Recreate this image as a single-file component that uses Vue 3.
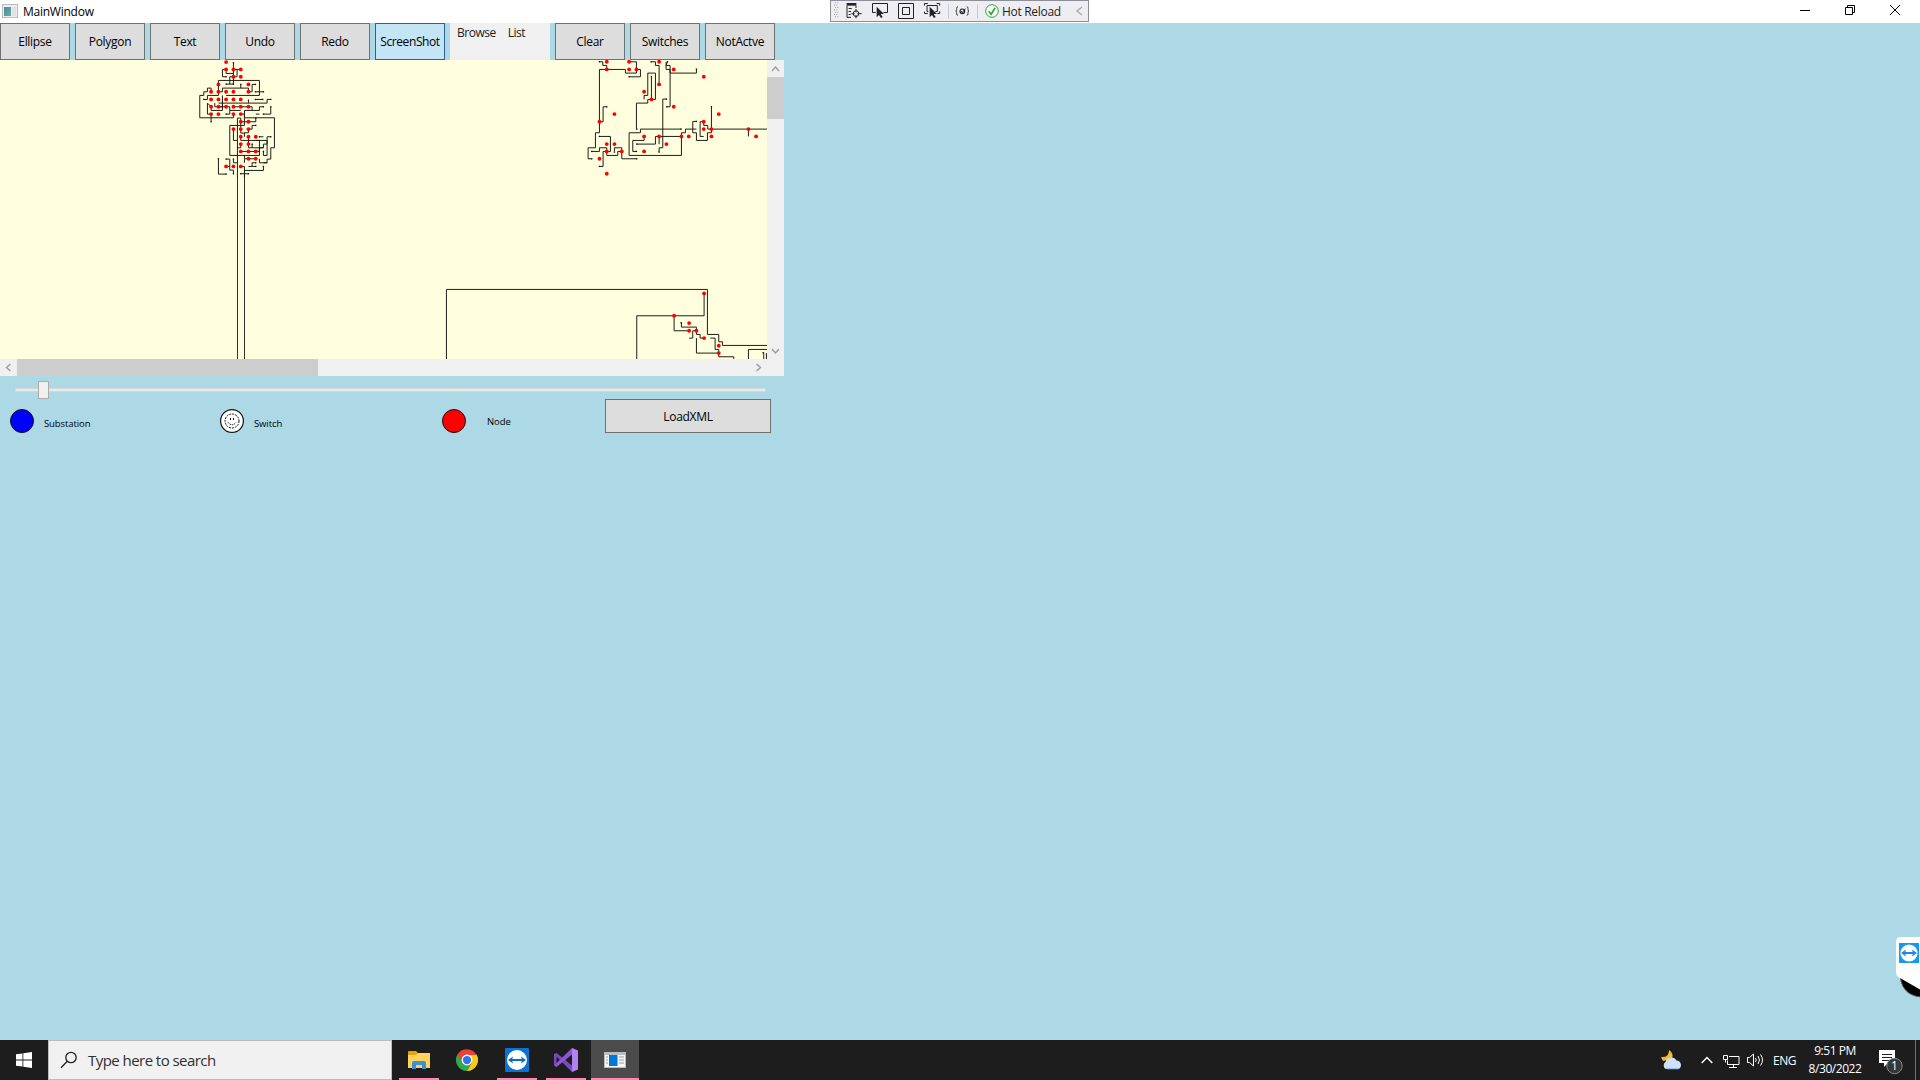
<script setup>
const leftButtons = ['Ellipse', 'Polygon', 'Text', 'Undo', 'Redo', 'ScreenShot']
const rightButtons = ['Clear', 'Switches', 'NotActve']

// Network sections are drawn in triple-density units around their own origin.
const sections = [
  {
    transform: 'translate(190.1 -1.9) scale(.33333)',
    lines: [
      '130,14 130,80', '108,34 97,34 97,56 108,56', '108,34 108,46 130,46', '141,34 141,56 119,56 119,78', '152,34 130,34', '108,78 130,78',
      '85,79 85,67 208,67 208,112 108,112', '85,79 85,112 63,112', '196,79 186,79 186,101 175,101 175,90 97,90 97,101 85,101',
      '152,79 152,90', '196,101 220,101', '63,101 63,90 52,90 52,101 41,101 41,112 29,112 29,179 130,179 130,168',
      '41,124 52,124 52,112 63,112', '196,124 218,124', '242,124 231,124 231,135 85,135', '175,124 175,135',
      '63,146 52,135 52,168 63,168 63,191', '74,135 74,146 97,146 97,124', '97,112 97,157 63,157 63,146', '85,146 119,146 119,157 152,157',
      '108,168 119,168 119,157', '186,157 208,157 208,146 220,146', '130,146 186,146 186,157 163,157 163,179 253,179 253,269 242,269 242,303 231,303 231,314 220,314',
      '220,168 242,168 242,146', '197,168 208,168', '152,168 163,168 163,202 119,202 119,292 208,292 208,247 152,247 152,236',
      '142,180 142,360', '142,180 152,180 152,225 163,225', '152,191 197,191 197,180', '175,213 186,213 186,202 197,202', '175,213 175,224 163,224 163,236',
      '130,213 130,247 141,247', '175,236 175,269 220,269 220,258 231,258 231,236 242,236', '208,236 220,236', '152,258 152,269 141,269',
      '197,247 231,247 231,292 220,292 220,280', '186,258 186,269', '152,280 208,280 208,269 220,269',
      '208,302 208,314 231,314', '197,302 163,302 163,292', '85,302 85,348 108,348', '108,303 119,303 119,336 130,336 130,347', '130,303 130,314 141,314',
      '163,314 163,303', '152,325 163,325 163,337 220,337 220,325', '175,325 186,325 186,314 197,314', '186,325 197,325', '163,337 163,360', '152,347 175,347', '108,325 119,325'
    ],
    ends: [[130,14],[108,56],[108,78],[130,78],[196,79],[152,79],[196,101],[220,101],[41,124],[196,124],[218,124],[242,124],[63,191],[108,168],[220,146],[242,146],[220,168],[197,180],[197,202],[208,236],[242,236],[186,258],[220,280],[85,302],[108,303],[130,303],[108,348],[130,347],[197,314],[197,325],[220,325],[152,347],[175,347]],
    dots: [[108,12],[108,34],[130,34],[152,34],[130,56],[152,56],[85,79],[175,79],[63,101],[85,101],[108,101],[130,101],[175,101],[63,124],[85,124],[108,124],[130,124],[152,124],[63,146],[85,146],[108,146],[130,146],[152,146],[175,146],[63,168],[85,168],[130,168],[152,168],[152,191],[175,191],[130,213],[152,213],[175,213],[152,236],[175,236],[197,236],[152,258],[175,258],[152,280],[175,280],[197,280],[175,302],[197,302],[108,325],[130,325],[152,325]]
  },
  {
    transform: 'translate(580.1 -3.9) scale(.33333)',
    lines: [
      '58,17 68,17 68,28 80,28 80,40', '58,197 58,40 136,40 136,51 169,51 169,40', '147,17 169,17 169,40 181,40 181,62 147,62',
      '213,17 226,17 226,28 237,28 237,85', '192,130 192,118 203,118 203,51 226,51 226,130 213,130', '214,62 214,130 203,130 203,141 169,141 169,219',
      '262,17 258,28 270,28 270,51 349,51 349,39', '258,17 258,40 270,40 270,152 260,152',
      '80,152 69,152 69,197 58,197 58,230 46,230 46,275 24,275 24,308 35,308', '58,241 91,241 91,286 80,286 80,298 113,298 113,286 125,286 125,308 170,308',
      '35,286 58,286 58,275 80,275 80,286 69,286 69,331 58,331', '103,286 103,275 125,275 125,286',
      '259,129 248,129 248,275 237,275 237,288', '303,219 181,219 181,230 147,230 147,298 304,298 304,241',
      '192,241 192,253 158,253 158,286 169,286', '170,264 226,264 226,241 304,241 304,230 316,230 316,219 349,219', '237,241 237,264',
      '349,196 338,196 338,230 349,230 349,253 382,253 382,230 394,230 394,152', '371,208 383,208 383,219 565,219', '371,197 360,197 360,241 371,241', '371,197 371,208', '505,219 505,241'
    ],
    ends: [[58,17],[213,17],[262,17],[349,39],[260,152],[80,152],[170,219],[259,129],[303,219],[349,196],[394,152],[170,264],[58,241],[35,286],[35,308],[58,331],[103,288],[170,308],[237,288],[169,286],[147,62],[214,62]],
    dots: [[80,17],[147,17],[237,17],[80,40],[147,40],[169,40],[281,40],[371,62],[237,85],[192,107],[214,130],[281,152],[103,174],[416,174],[58,197],[371,197],[371,219],[394,219],[505,219],[192,241],[237,241],[304,241],[326,241],[394,241],[528,241],[80,264],[103,264],[259,264],[80,286],[125,286],[192,286],[58,308],[80,353]]
  },
  {
    transform: 'translate(430.1 220.1) scale(.33333)',
    lines: [
      '49,240 49,28 832,28 832,163 866,163 866,185 877,185 877,196 1012,196', '620,240 620,107 822,107 822,40', '732,107 732,152 777,152',
      '754,127 754,141 799,141 799,163 810,163 810,174 822,174', '777,174 788,174 788,152 799,152', '799,174 799,219 866,219 866,230 911,230 911,240',
      '841,174 855,174 855,208 866,208 866,219', '955,240 955,208 1012,208', '1001,217 1001,240', '1009,219 1009,240'
    ],
    ends: [[753,128],[999,218]],
    dots: [[822,40],[732,107],[777,129],[777,152],[799,152],[822,174],[866,197],[866,219]]
  }
]
</script>

<template>
  <div class="desktop">
    <header class="title">
      <svg class="app-icon" width="16" height="14" viewBox="0 0 16 14">
        <defs><linearGradient id="pane" x1="0" y1="0" x2="1" y2="1"><stop offset="0" stop-color="#5b7fb0" /><stop offset="1" stop-color="#5cb894" /></linearGradient></defs>
        <rect x=".5" y=".5" width="15" height="13" fill="#eceef0" stroke="#b9bdc1" />
        <rect x="2" y="3" width="7" height="9" fill="url(#pane)" />
        <path d="M10 3h4v9h-4z" fill="#dfe2e5" />
      </svg>
      <span class="title-text">MainWindow</span>
      <div class="controls">
        <svg width="12" height="12" viewBox="0 0 12 12"><path d="M1 6.5h10" /></svg>
        <svg width="12" height="12" viewBox="0 0 12 12"><path d="M1.5 3.5h7v7h-7zM3.5 3.5v-2h7v7h-2" /></svg>
        <svg width="12" height="12" viewBox="0 0 12 12"><path d="M1 1l10 10M11 1L1 11" /></svg>
      </div>
      <div class="debug">
        <svg width="160" height="20" viewBox="33 3 480 60">
          <g fill="#9a9aa6">
            <template v-for="r in 7" :key="r">
              <rect v-for="c in 2" :key="c" :x="35 + c * 7 + (r % 2) * 3" :y="r * 7" width="3" height="3" />
            </template>
          </g>
          <g fill="none" stroke="#222" stroke-width="3">
            <path d="M80 9h29v8H80z" fill="#222" stroke="none" /><path d="M81 17v35h12M86 25.500h9M86 34.500h7M86 43.500h6M108 17v7" />
            <circle cx="108" cy="41" r="8.500" /><path d="M108 27v10M108 45v10M94 41h10M112 41h13" />
            <path d="M167 37.500h-9.500v-27h45v27h-12" /><path d="M170 20v32l7-7 6 9 5-3-6-9h10z" fill="#222" stroke="none" />
            <path d="M235.500 10.500h45v45h-45zM247.500 22.500h21v21h-21z" />
            <path d="M313.500 17v-6.500h10M350 10.500h9v6.500M313.500 35v5.500h10M359 34v6.500h-7M325 34.500h-4v-18h31v18h-6" /><path d="M329 20v32l7-7 6 9 5-3-6-9h10z" fill="#222" stroke="none" />
            <path d="M414 20q-4 0-4 5v4q0 4-3 4 3 0 3 5v4q0 4 4 4M440 20q4 0 4 5v4q0 4 3 4-3 0-3 5v4q0 4-4 4" stroke-width="2.500" />
            <circle cx="427" cy="34" r="7" stroke-width="3.500" /><path d="M423 33l4 5 9-12" />
          </g>
          <path d="M385.500 13v42M472.500 13v42" stroke="#c5c8d6" stroke-width="3" />
        </svg>
        <svg class="ok" width="14" height="14" viewBox="0 0 14 14" fill="none" stroke="#35a03b"><circle cx="7" cy="7" r="6.300" fill="#f5fff5" /><path d="M3.800 7.200l2.300 3 4-6.200" stroke-width="1.700" /></svg>
        <span class="hot">Hot Reload</span>
        <svg class="collapse" width="7" height="10" viewBox="0 0 7 10"><path d="M6 1L1 5l5 4" fill="none" stroke="#a5a5a5" stroke-width="1.200" /></svg>
      </div>
    </header>

    <main>
      <div class="toolbar">
        <button v-for="b in leftButtons" :key="b" :class="{ hover: b === 'ScreenShot' }"><span>{{ b }}</span></button>
        <nav><span>Browse</span><span>List</span></nav>
        <button v-for="b in rightButtons" :key="b"><span>{{ b }}</span></button>
      </div>

      <section class="viewer">
        <svg class="canvas" width="767" height="299" viewBox="0 0 767 299">
          <path d="M237.500 118v181M244.500 110v189" fill="none" stroke="#34342c" />
          <g v-for="(s, i) in sections" :key="i" :transform="s.transform">
            <g fill="none" stroke="#1d1d18" stroke-width="3">
              <polyline v-for="(l, j) in s.lines" :key="j" :points="l" />
            </g>
            <rect v-for="(e, j) in s.ends" :key="'e' + j" :x="e[0] - 2" :y="e[1] - 2" width="4" height="4" fill="#111" />
            <circle v-for="(d, j) in s.dots" :key="'d' + j" :cx="d[0]" :cy="d[1]" r="5.800" fill="#f00" />
          </g>
        </svg>
        <div class="vbar">
          <svg width="17" height="17" viewBox="0 0 17 17"><path d="M5 11l3.500-4 3.500 4" /></svg>
          <i></i>
          <svg width="17" height="17" viewBox="0 0 17 17"><path d="M5 7l3.500 4 3.500-4" /></svg>
        </div>
        <div class="hbar">
          <svg width="17" height="17" viewBox="0 0 17 17"><path d="M10.500 5l-4 3.500 4 3.500" /></svg>
          <i></i>
          <svg width="17" height="17" viewBox="0 0 17 17"><path d="M6.500 5l4 3.500-4 3.500" /></svg>
        </div>
      </section>

      <div class="slider"><div class="track"></div><div class="thumb"></div></div>

      <div class="legend">
        <div class="item one"><b class="dot blue"></b><span class="low">Substation</span></div>
        <div class="item two">
          <svg width="24" height="24" viewBox="0 0 24 24">
            <circle cx="12" cy="12" r="11.400" fill="#fff" stroke="#111" stroke-width="1.200" />
            <circle cx="12" cy="12" r="7" fill="none" stroke="#111" stroke-dasharray="2 1" />
            <path d="M10.500 9v2M13.500 9v2" stroke="#111" /><path d="M8 13.500q4 4.500 8 0" fill="none" stroke="#111" stroke-dasharray="1.500 .7" />
          </svg>
          <span class="low">Switch</span>
        </div>
        <div class="item three"><b class="dot red"></b><span class="node">Node</span></div>
        <button class="load"><span>LoadXML</span></button>
      </div>
    </main>

    <footer>
      <div class="start"><svg width="16" height="16" viewBox="0 0 16 16" fill="#fff"><path d="M0 2.300l6.500-.9v6.200H0zM7.300 1.200L16 0v7.600H7.300zM0 8.400h6.500v6.200L0 13.700zM7.300 8.400H16V16l-8.700-1.200z" /></svg></div>
      <div class="search">
        <svg width="18" height="18" viewBox="0 0 18 18" fill="none" stroke="#222" stroke-width="1.300"><circle cx="11" cy="6.500" r="5.200" /><path d="M7.300 10.300L1 16.700" /></svg>
        <span>Type here to search</span>
      </div>
      <div class="apps">
        <div class="app run">
          <svg width="22" height="18" viewBox="0 0 22 18"><path d="M0 1q0-1 1-1h7l2 2h11q1 0 1 1v14H0z" fill="#e5a50a" /><path d="M0 4h8l2-2h12v15H0z" fill="#ffd35c" /><path d="M4 18v-6q0-2 2-2h10q2 0 2 2v6h-4v-4H8v4z" fill="#3a91d5" /></svg>
        </div>
        <div class="app chrome">
          <svg width="22" height="22" viewBox="0 0 24 24"><path d="M12 12L1.600 6A12 12 0 0 0 12 24l5.200-9z" fill="#2da94f" /><path d="M12 12l5.200 3L12 24A12 12 0 0 0 22.400 6H12z" fill="#fdc915" /><path d="M1.600 6A12 12 0 0 1 22.400 6.600H12L6.800 15z" fill="#e94335" /><circle cx="12" cy="12" r="5.900" fill="#fff" /><circle cx="12" cy="12" r="4.500" fill="#2e75ee" /></svg>
        </div>
        <div class="app run">
          <svg width="24" height="24" viewBox="0 0 24 24"><rect width="24" height="24" rx="1" fill="#0b72d4" /><circle cx="12" cy="12" r="10" fill="#fff" /><path d="M3 12l5-3.500-.8 2.500h9.600l-.8-2.500 5 3.500-5 3.500.8-2.500H7.200l.8 2.500z" fill="#096bca" /></svg>
        </div>
        <div class="app run">
          <svg width="24" height="24" viewBox="0 0 24 24"><path d="M0 6l2.500-1L18 17.500V24L2.500 8.500V16L0 17.500z" fill="#7a48c0" /><path d="M0 17.500L18 0v6.500L2.500 19z" fill="#8d55d6" /><path d="M18 0l6 2.500v19L18 24z" fill="#b183f0" /></svg>
        </div>
        <div class="app run active">
          <svg width="22" height="16" viewBox="0 0 22 16"><rect width="22" height="16" fill="#b9bdc0" /><path d="M1 3h20v12H1z" fill="#f7f7f7" /><path d="M5 3h8.500v11H5z" fill="#0078d7" /><path d="M2 5h2M2 8h2M2 11h2M15 5h5M15 8h5M15 11h5" stroke="#999" /></svg>
        </div>
      </div>
      <div class="tray">
        <svg class="weather" width="22" height="20" viewBox="0 0 22 20"><path d="M8 0q5 3 3 9l-9 2-2-4q8 1 8-7z" fill="#f8b92c" /><path d="M5 19a4 4 0 0 1-.5-7 6 6 0 0 1 11-1.500 4.500 4.500 0 0 1 2 8.500z" fill="#cfe1fa" /><path d="M4 18h15l-2 1.300H6z" fill="#9fbfeb" /></svg>
        <svg class="chev" width="12" height="8" viewBox="0 0 12 8" fill="none" stroke="#fff" stroke-width="1.400"><path d="M.7 7L6 1.500 11.300 7" /></svg>
        <svg class="net" width="17" height="15" viewBox="0 0 17 15" fill="none" stroke="#fff"><path d="M6 2.500h10v8H4.500v-4M10.500 10.500v3M6 13.500h8M.5 1.500h4v4h-4zM2.500 5.500v3" /></svg>
        <svg class="sound" width="17" height="14" viewBox="0 0 17 14" fill="none" stroke="#fff"><path d="M.5 4.500h2l4-3.500v12l-4-3.500h-2zM8.500 5q1.500 2 0 4M11 3q3 4 0 8M13.500 1.500q4 5.500 0 11" /></svg>
        <span class="lang">ENG</span>
        <div class="clock"><span>9:51 PM</span><span>8/30/2022</span></div>
        <div class="notes">
          <svg width="24" height="26" viewBox="0 0 24 26"><path d="M0 0h16v13H9l-4 4v-4H0z" fill="#fff" /><path d="M3 4.500h10M3 7.500h10M3 10.500h7" stroke="#222" /><circle cx="15.500" cy="16" r="7.700" fill="#373737" stroke="#888" /></svg>
          <em>1</em>
        </div>
        <div class="peek"></div>
      </div>
    </footer>

    <div class="tv">
      <svg width="25" height="61" viewBox="0 0 25 61"><path d="M4 35q0 23 21 25V35z" fill="#000" stroke="#555" /><path d="M25 0H5Q0 0 0 5v30q0 4 4 6l21 12z" fill="#fff" /><rect x="3" y="6" width="20" height="20" fill="#1597f5" /><circle cx="13" cy="16" r="8.600" fill="#fff" /><path d="M5 16l5-3.500-.7 2.500h7.400l-.7-2.500 5 3.500-5 3.500.7-2.500H9.300l.7 2.500z" fill="#2585e4" /></svg>
    </div>
  </div>
</template>

<style>
body { margin: 0; overflow: hidden; }
</style>

<style scoped>
* { box-sizing: border-box; }
.desktop { position: relative; width: 1920px; height: 1080px; display: flex; flex-direction: column; background: #add8e6; font: 12px "Open Sans", "Noto Sans", sans-serif; color: #000; overflow: hidden; }
svg { display: block; flex: none; }
span { white-space: nowrap; }
.title { position: relative; height: 23px; background: #fff; display: flex; align-items: center; padding-left: 2px; flex: none; }
.app-icon { margin-top: -1px; }
.title-text { margin-left: 5px; letter-spacing: -.25px; }
.controls { margin-left: auto; display: flex; gap: 33px; padding: 0 19px 3px 0; fill: none; stroke: #000; }
.debug { position: absolute; left: 830px; top: 0; width: 259px; height: 22px; background: #eeeef2; border: 1px solid #8e8e98; display: flex; align-items: center; color: #1e1e1e; }
.ok { margin-left: -6px; }
.hot { margin-left: 3px; letter-spacing: -.3px; }
.collapse { margin-left: auto; margin-right: 5px; }
main { flex: 1; min-height: 0; display: flex; flex-direction: column; align-items: flex-start; }
.toolbar { display: flex; gap: 5px; height: 37px; flex: none; }
button { width: 70px; height: 37px; padding: 0; border: 1px solid #707070; border-radius: 0; background: #ddd; font: inherit; color: #000; letter-spacing: -.3px; display: flex; align-items: center; justify-content: center; }
button.hover { background: #c4e5f6; border-color: #2c628b; letter-spacing: -.4px; }
nav { width: 100px; background: #f0f0f0; color: #212121; display: flex; gap: 12px; padding: 1px 0 0 7px; letter-spacing: -.5px; line-height: 18px; }
.viewer { width: 784px; height: 316px; display: grid; grid-template-columns: 767px 17px; grid-template-rows: 299px 17px; background: #f0f0f0; flex: none; }
.canvas { background: #ffffe0; }
.vbar { display: flex; flex-direction: column; }
.vbar i { height: 42px; margin-bottom: auto; background: #cdcdcd; }
.hbar { display: flex; }
.hbar i { width: 301px; margin-right: auto; background: #cdcdcd; }
.vbar path, .hbar path { fill: none; stroke: #9b9b9b; stroke-width: 1.4; }
.slider { position: relative; width: 784px; height: 23px; padding: 12px 0 0 15px; flex: none; }
.track { width: 751px; height: 4px; border: 1px solid #d6d6d6; background: #e7eaea; }
.thumb { position: absolute; left: 38px; top: 5px; width: 11px; height: 18px; background: #f0f0f0; border: 1px solid #acacac; }
.legend { display: flex; height: 34px; padding-left: 10px; font-size: 9.500px; flex: none; }
.item { display: flex; align-items: center; padding-top: 10px; height: 34px; letter-spacing: -.1px; }
.one { width: 210px; }
.two { width: 222px; }
.three { width: 163px; }
.dot { width: 24px; height: 24px; border-radius: 50%; border: 1px solid #111; }
.blue { background: #00f; }
.red { background: #f00; }
.low { margin: 4px 0 0 10px; }
.node { margin-left: 21px; }
.load { width: 166px; height: 34px; font-size: 12px; }
footer { height: 40px; flex: none; background: #1d1d1d; display: flex; color: #fff; }
.start { width: 48px; display: flex; align-items: center; justify-content: center; }
.search { width: 344px; background: #f1f1f1; border: 1px solid #bdbdbd; display: flex; align-items: center; color: #303030; font-size: 15px; padding-left: 11px; }
.search svg { margin-top: -1px; }
.search span { margin-left: 10px; letter-spacing: -.55px; }
.apps { display: flex; gap: 1px; padding-left: 3px; }
.app { position: relative; width: 48px; display: flex; align-items: center; justify-content: center; }
.chrome { padding-right: 2px; }
.run::after { content: ""; position: absolute; left: 4px; right: 4px; bottom: 0; height: 2px; background: #ff86b7; }
.active { background: #4b4b4b; }
.active::after { left: 0; right: 0; }
.tray { margin-left: auto; width: 259px; display: flex; align-items: center; }
.weather { width: 22px; }
.chev { margin-left: 18px; }
.net { margin-left: 10px; margin-top: 2px; }
.sound { margin-left: 7px; }
.lang { margin-left: 9px; width: 24px; letter-spacing: -.5px; }
.clock { width: 54px; margin-left: 11px; display: flex; flex-direction: column; align-items: center; line-height: 18px; letter-spacing: -.45px; }
.notes { position: relative; margin-left: 17px; padding-top: 5px; width: 24px; }
.notes em { position: absolute; left: 12px; top: 13px; font-style: normal; line-height: 16px; }
.peek { margin-left: auto; width: 5px; height: 40px; border-left: 1px solid #707070; }
.tv { position: absolute; left: 1896px; top: 937px; }
</style>
